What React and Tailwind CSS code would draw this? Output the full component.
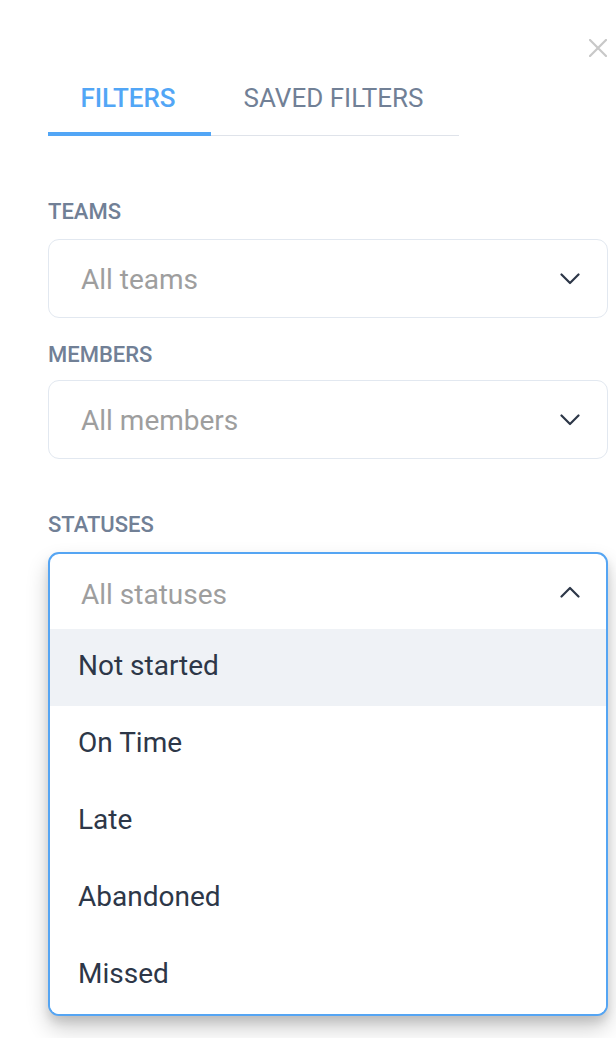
import React from "react";

function ChevronDown() {
  return (
    <svg width="20" height="12" viewBox="0 0 20 12" fill="none" className="shrink-0">
      <path d="M1.5 1.5 L10 10 L18.5 1.5" stroke="#2d3748" strokeWidth="2.2" strokeLinecap="round" strokeLinejoin="round" />
    </svg>
  );
}

function ChevronUp() {
  return (
    <svg width="20" height="12" viewBox="0 0 20 12" fill="none" className="shrink-0">
      <path d="M1.5 10.5 L10 2 L18.5 10.5" stroke="#2d3748" strokeWidth="2.2" strokeLinecap="round" strokeLinejoin="round" />
    </svg>
  );
}

function CloseIcon() {
  return (
    <svg width="18" height="18" viewBox="0 0 18 18" fill="none">
      <path d="M1 1 L17 17 M17 1 L1 17" stroke="#c8c8c8" strokeWidth="2.2" strokeLinecap="square" />
    </svg>
  );
}

function Label({ children, className = "" }) {
  return (
    <div className={"text-[22px] leading-[28px] font-medium text-[#718096] " + className}>{children}</div>
  );
}

function Select({ placeholder, className = "" }) {
  return (
    <div
      className={
        "h-[79px] rounded-[11px] border border-[#e2e8f0] bg-white flex items-center justify-between pl-[32px] pr-[27px] " +
        className
      }
    >
      <span className="text-[28px] text-[#9e9e9e] pt-[2px]">{placeholder}</span>
      <ChevronDown />
    </div>
  );
}

const options = ["Not started", "On Time", "Late", "Abandoned", "Missed"];

export default function App() {
  return (
    <div className="w-[616px] h-[1038px] bg-white overflow-hidden font-['Roboto',sans-serif] flex flex-col pl-[48px] pr-[8px]">
      <div className="flex justify-end pt-[39px] pr-[1px]">
        <CloseIcon />
      </div>

      <div className="flex items-start w-[411px] mt-[13px]">
        <div className="h-[66px] w-[163px] pt-[13px] pr-[3px] border-b-[4px] border-[#52a6f6] flex justify-center">
          <span className="text-[26px] leading-[30px] font-medium text-[#52a6f6]">FILTERS</span>
        </div>
        <div className="h-[66px] flex-1 pt-[13px] pr-[3px] border-b border-[#dfe3ea] flex justify-center">
          <span className="text-[26px] leading-[30px] text-[#718096]">SAVED FILTERS</span>
        </div>
      </div>

      <Label className="mt-[62px]">TEAMS</Label>
      <Select placeholder="All teams" className="mt-[13px]" />

      <Label className="mt-[23px]">MEMBERS</Label>
      <Select placeholder="All members" className="mt-[11px]" />

      <Label className="mt-[52px]">STATUSES</Label>
      <div className="mt-[13px] rounded-[11px] border-2 border-[#55a5f3] bg-white overflow-hidden shadow-[0_12px_22px_rgba(0,0,0,0.2),0_6px_8px_rgba(0,0,0,0.1)]">
        <div className="h-[75px] flex items-center justify-between pl-[31px] pr-[26px]">
          <span className="text-[28px] text-[#9e9e9e] pt-[6px]">All statuses</span>
          <ChevronUp />
        </div>
        {options.map((o, i) => (
          <div
            key={o}
            className={
              "h-[77px] flex items-center pl-[28px] pb-[4px] text-[28px] text-[#2d3748] " +
              (i === 0 ? "bg-[#eff2f6]" : "bg-white")
            }
          >
            {o}
          </div>
        ))}
      </div>
    </div>
  );
}
